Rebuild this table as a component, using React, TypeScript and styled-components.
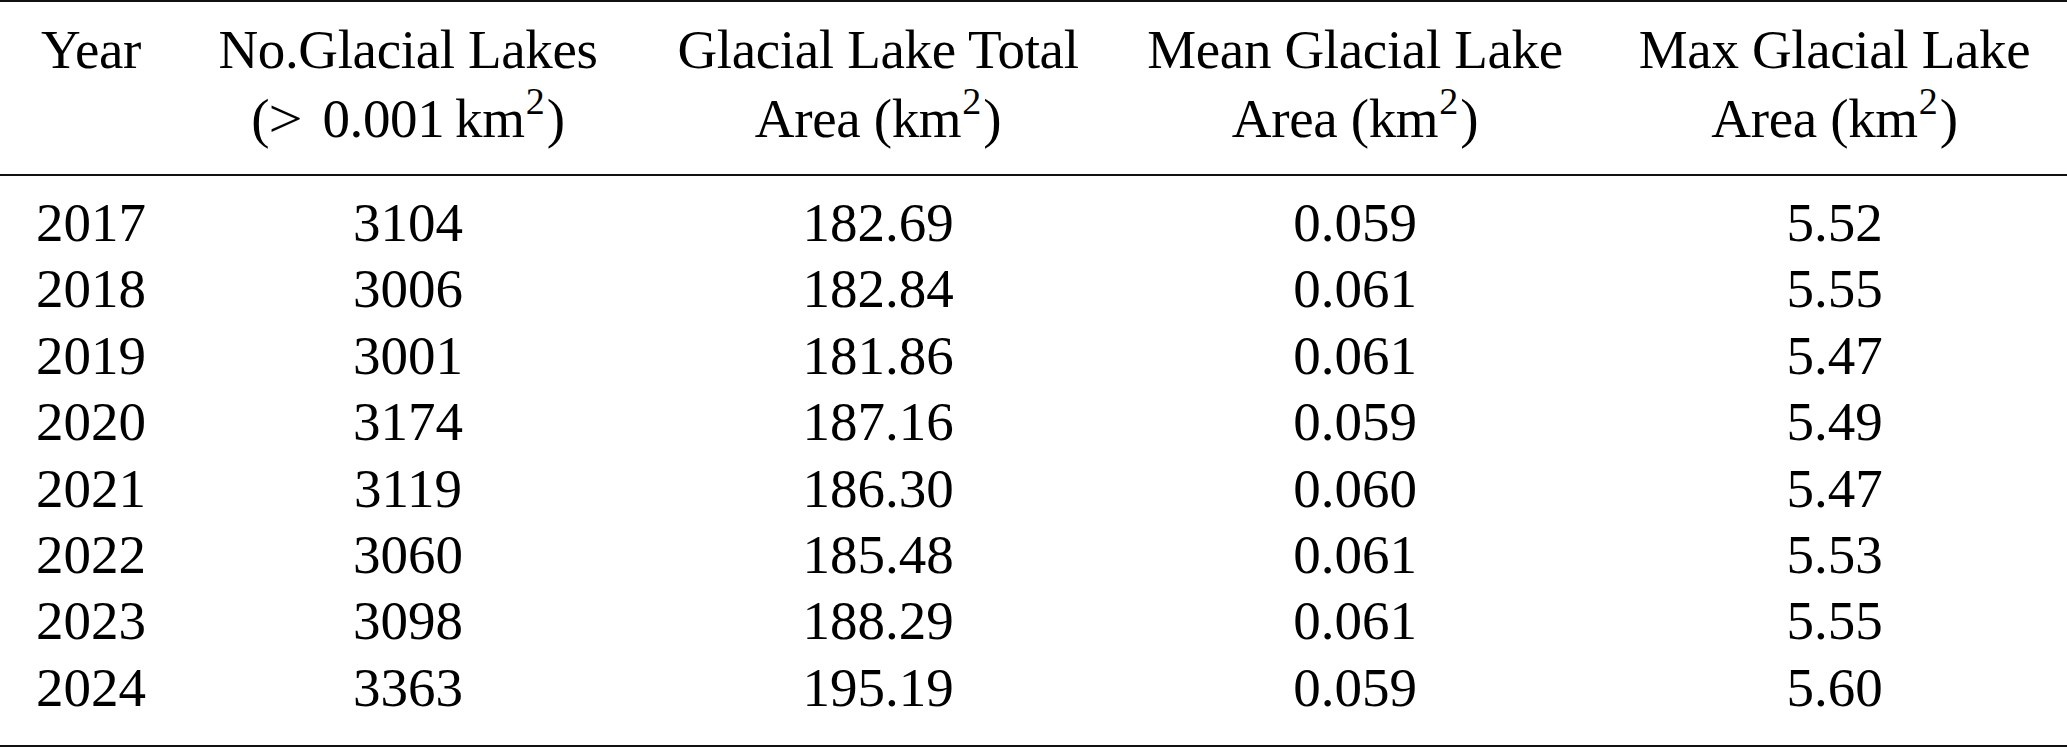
import React from "react";
import styled, { createGlobalStyle } from "styled-components";

const GlobalStyle = createGlobalStyle`
  html, body {
    margin: 0;
    padding: 0;
    background: #fff;
  }

  body {
    font-family: "Liberation Serif", "Times New Roman", serif;
    color: #000;
    overflow: hidden;
  }
`;

interface ILakeRow {
  year: number;
  count: number;
  total: string;
  mean: string;
  max: string;
}

const rows: ILakeRow[] = [
  { year: 2017, count: 3104, total: "182.69", mean: "0.059", max: "5.52" },
  { year: 2018, count: 3006, total: "182.84", mean: "0.061", max: "5.55" },
  { year: 2019, count: 3001, total: "181.86", mean: "0.061", max: "5.47" },
  { year: 2020, count: 3174, total: "187.16", mean: "0.059", max: "5.49" },
  { year: 2021, count: 3119, total: "186.30", mean: "0.060", max: "5.47" },
  { year: 2022, count: 3060, total: "185.48", mean: "0.061", max: "5.53" },
  { year: 2023, count: 3098, total: "188.29", mean: "0.061", max: "5.55" },
  { year: 2024, count: 3363, total: "195.19", mean: "0.059", max: "5.60" },
];

const Km2 = () => (
  <>
    km<Sup>2</Sup>
  </>
);

export default function App() {
  return (
    <>
      <GlobalStyle />
      <Table>
        <HeadRow>
          <HeadCell>
            <HeadLine>Year</HeadLine>
          </HeadCell>
          <HeadCell>
            <HeadLine>No.Glacial Lakes</HeadLine>
            <HeadLine>
              (<Rel>&gt;</Rel> 0.001&#8201;<Km2 />)
            </HeadLine>
          </HeadCell>
          <HeadCell>
            <HeadLine>Glacial Lake Total</HeadLine>
            <HeadLine>
              Area (<Km2 />)
            </HeadLine>
          </HeadCell>
          <HeadCell>
            <HeadLine>Mean Glacial Lake</HeadLine>
            <HeadLine>
              Area (<Km2 />)
            </HeadLine>
          </HeadCell>
          <HeadCell $last>
            <HeadLine>Max Glacial Lake</HeadLine>
            <HeadLine>
              Area (<Km2 />)
            </HeadLine>
          </HeadCell>
        </HeadRow>
        <Body>
          {rows.map((row) => (
            <DataRow key={row.year}>
              <Cell>{row.year}</Cell>
              <Cell>{row.count}</Cell>
              <Cell>{row.total}</Cell>
              <Cell>{row.mean}</Cell>
              <Cell $last>{row.max}</Cell>
            </DataRow>
          ))}
        </Body>
      </Table>
    </>
  );
}

const columns = "182px 452px 488px 466px 1fr";

const Table = styled.div`
  width: 2067px;
  height: 747px;
  box-sizing: border-box;
  border-top: 2px solid #111;
  border-bottom: 2px solid #111;
  display: flex;
  flex-direction: column;
  font-size: 55px;
`;

const HeadRow = styled.div`
  display: grid;
  grid-template-columns: ${columns};
  align-items: start;
  padding: 13px 0 21px;
  border-bottom: 2px solid #111;
`;

const HeadCell = styled.div<{ $last?: boolean }>`
  display: flex;
  flex-direction: column;
  align-items: center;
  padding-left: ${(p) => (p.$last ? "14px" : "0")};
  letter-spacing: -0.35px;
`;

const HeadLine = styled.span`
  display: block;
  line-height: 69px;
  white-space: nowrap;
`;

/* the math ">" sits a little wider than the text one */
const Rel = styled.span`
  display: inline-block;
  margin: 0 8px 0 1px;
  transform: scaleX(1.1);
`;

const Sup = styled.sup`
  font-size: 38px;
  line-height: 0;
  vertical-align: 23px;
  letter-spacing: 0;
  margin: 0 2px 0 1px;
`;

const Body = styled.div`
  display: flex;
  flex-direction: column;
  padding-top: 14px;
`;

const DataRow = styled.div`
  display: grid;
  grid-template-columns: ${columns};
  line-height: 66.4px;
`;

const Cell = styled.div<{ $last?: boolean }>`
  text-align: center;
  white-space: nowrap;
  padding-left: ${(p) => (p.$last ? "14px" : "0")};
`;
